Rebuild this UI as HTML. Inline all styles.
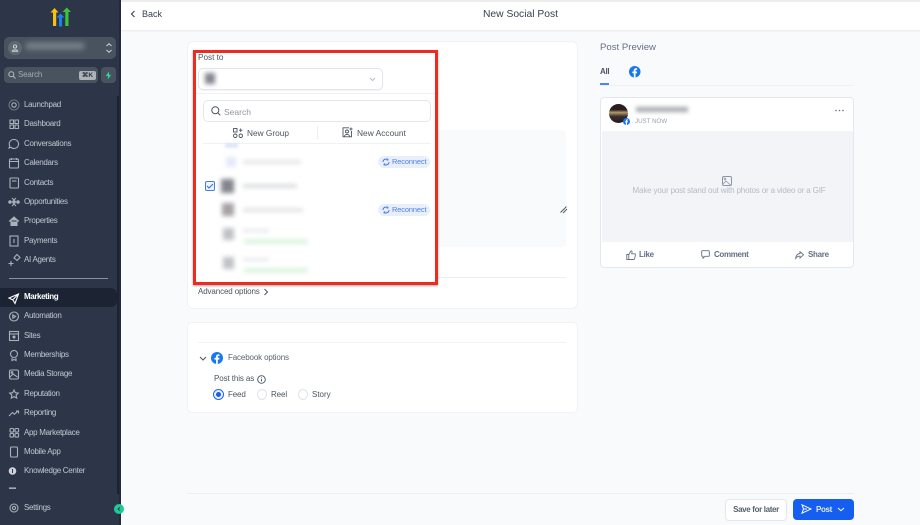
<!DOCTYPE html>
<html><head><meta charset="utf-8"><style>
*{box-sizing:border-box}
html,body{margin:0;padding:0}
body{width:920px;height:525px;overflow:hidden;position:relative;background:#f9fafc;font-family:"Liberation Sans",sans-serif;color:#374151}
.a{position:absolute}
.t{position:absolute;white-space:nowrap;line-height:12px}
.nav{position:absolute;left:24px;font-size:8px;letter-spacing:-.3px;line-height:12px;color:#c3c8d0;white-space:nowrap}
svg{position:absolute;overflow:visible;fill:none}
.ic{stroke:#aab1bc;stroke-width:1.1}
.blur{position:absolute}
</style></head><body>
<!-- sidebar -->
<div class="a" style="left:0;top:0;width:121px;height:525px;background:#2c3648"></div>
<div class="a" style="left:117px;top:96px;width:4px;height:398px;background:#1b2230"></div>
<div class="a" style="left:119px;top:0;width:2px;height:525px;background:#232b3a"></div>
<svg style="left:48px;top:6px" width="26" height="22" viewBox="0 0 26 22">
<path d="M2.500 6.500L6.500 2L10.500 6.500H8.200V20H5V6.500Z" fill="#fbbf0f"/>
<path d="M8.500 11.500L12.500 7.500L16.500 11.500H14V20.500H11V11.500Z" fill="#1a82ef"/>
<path d="M14.500 6L18.800 1.500L23 6H20.500V20H17.300V6Z" fill="#3ac43c"/>
</svg>
<div class="a" style="left:4px;top:37px;width:112px;height:22px;border-radius:5px;background:#49535f"></div>
<div class="a" style="left:8px;top:41px;width:14px;height:14px;border-radius:50%;background:#5f6873"></div>
<svg style="left:11px;top:44px" width="8" height="8" viewBox="0 0 8 8"><circle cx="4" cy="2.500" r="1.600" stroke="#d5d8dc" stroke-width=".9"/><path d="M1.300 7.300C1.300 5.300 6.700 5.300 6.700 7.300Z" stroke="#d5d8dc" stroke-width=".9"/></svg>
<div class="blur" style="left:26px;top:43px;width:58px;height:6px;background:#7f8791;filter:blur(3px)"></div>
<svg style="left:105px;top:42px" width="8" height="12" viewBox="0 0 8 12"><path d="M1.500 4L4 1.700L6.500 4M1.500 8L4 10.300L6.500 8" stroke="#ccd0d5"/></svg>
<div class="a" style="left:4px;top:67px;width:94px;height:16px;border-radius:4px;background:#49535f"></div>
<svg style="left:8px;top:71px" width="8" height="8" viewBox="0 0 8 8"><circle cx="3.300" cy="3.300" r="2.500" stroke="#b6bbc2"/><path d="M5.200 5.200L7.500 7.500" stroke="#b6bbc2"/></svg>
<div class="t" style="left:18px;top:69px;font-size:8px;letter-spacing:-.2px;color:#a3a9b2">Search</div>
<div class="a" style="left:79px;top:71px;width:17px;height:9px;border-radius:2px;background:#aeb3ba;color:#2c3648;font-size:6.500px;font-weight:bold;line-height:9px;text-align:center">⌘K</div>
<div class="a" style="left:101px;top:67px;width:15px;height:16px;border-radius:4px;background:#49535f"></div>
<svg style="left:105px;top:71px" width="7" height="9" viewBox="0 0 7 9"><path d="M4 .5L.8 5H3L2.700 8.500L6.200 3.800H4Z" fill="#34d399"/></svg>

<div class="a" style="left:0;top:288px;width:117px;height:19px;border-radius:0 6px 6px 0;background:#1c2433"></div>
<div class="a" style="left:9px;top:278px;width:99px;height:1px;background:#8b929c"></div>

<div class="nav" style="top:99px">Launchpad</div>
<div class="nav" style="top:118px">Dashboard</div>
<div class="nav" style="top:138px">Conversations</div>
<div class="nav" style="top:157px">Calendars</div>
<div class="nav" style="top:177px">Contacts</div>
<div class="nav" style="top:196px">Opportunities</div>
<div class="nav" style="top:215px">Properties</div>
<div class="nav" style="top:235px">Payments</div>
<div class="nav" style="top:254px">AI Agents</div>
<div class="nav" style="top:291px;color:#fff;font-weight:bold;font-size:8px;letter-spacing:-.4px">Marketing</div>
<div class="nav" style="top:310px">Automation</div>
<div class="nav" style="top:330px">Sites</div>
<div class="nav" style="top:349px">Memberships</div>
<div class="nav" style="top:368px">Media Storage</div>
<div class="nav" style="top:388px">Reputation</div>
<div class="nav" style="top:407px">Reporting</div>
<div class="nav" style="top:427px">App Marketplace</div>
<div class="nav" style="top:446px">Mobile App</div>
<div class="nav" style="top:465px">Knowledge Center</div>
<div class="nav" style="top:502px">Settings</div>

<svg width="30" height="525" style="left:0;top:0" viewBox="0 0 30 525">
<g class="ic">
<circle cx="14" cy="105" r="5" stroke="#6b7480"/><circle cx="14" cy="105" r="2.200"/>
<path d="M10 120h3.500v3.500H10zM15 120h3.500v3.500H15zM10 125h3.500v3.500H10zM15 125h3.500v3.500H15z"/>
<path d="M14 139.500a4.500 4.500 0 1 1-3 7.800l-2 .7.700-2a4.500 4.500 0 0 1 4.300-6.500z"/>
<rect x="9.500" y="159" width="9" height="9" rx="1"/><path d="M9.500 161.500h9M11.500 158v2M16.500 158v2"/>
<rect x="10" y="178" width="8.500" height="10" rx="1"/><path d="M12 181h4.500"/>
<path d="M12 198l2 2 2-2M12 206l2-2 2 2" /><circle cx="14" cy="202" r="1.300" fill="#aab1bc"/><circle cx="10" cy="202" r="1.200" fill="#aab1bc"/><circle cx="18" cy="202" r="1.200" fill="#aab1bc"/>
<path d="M9 221.500l5-4.500 5 4.500M11 220.500v5h6v-5" fill="#aab1bc"/>
<rect x="10" y="236" width="8" height="10"/><path d="M14 239v4"/>
<path d="M14 258l1.500-2 1.500-1.500 1.500 1.500 1.500 1.500-1.500 1.500-1.500 1.500-1.500-1.500zM11 261v5M8.500 263.500h5"/>
<circle cx="14" cy="316.500" r="4.500"/><path d="M12.800 314.800l2.800 1.700-2.800 1.700z"/>
<rect x="9.500" y="331.500" width="9" height="9"/><path d="M9.500 334h9"/><circle cx="14" cy="337" r="1" fill="#aab1bc"/>
<circle cx="14" cy="354" r="3.500"/><path d="M12 358v2.500l2-1 2 1V358"/>
<rect x="9.500" y="370" width="9" height="9" rx="1.500"/><path d="M10 377l3-3 4.500 3"/><circle cx="12" cy="372.500" r=".8"/>
<path d="M14 390l1.300 2.700 3 .4-2.200 2 .6 3-2.700-1.500-2.700 1.500.6-3-2.200-2 3-.4z"/>
<path d="M9 416l3.500-3.500 2 1.800 3.500-3.500M16 411h2.500v2.500"/>
<rect x="10" y="428.500" width="3.600" height="3.600" rx="1"/><rect x="15" y="428.500" width="3.600" height="3.600" rx="1"/><rect x="10" y="433.500" width="3.600" height="3.600" rx="1"/><rect x="15" y="433.500" width="3.600" height="3.600" rx="1"/>
<rect x="10.500" y="447" width="7" height="10" rx="1"/>
<circle cx="14" cy="508" r="4"/><circle cx="14" cy="508" r="1.600"/>
</g>
<path d="M9 298l9.500-4-3.500 9.500-2-3.500zM12.500 300l6-6" stroke="#fff" stroke-width="1.100"/>
<circle cx="12.500" cy="471" r="3.800" fill="#d0d4da"/><rect x="12" y="469" width="1" height="4" fill="#2c3648"/>
<rect x="9" y="487.500" width="7" height="1.300" fill="#c3c8d0"/>
</svg>
<div class="a" style="left:0;top:491px;width:117px;height:8px;background:#2c3648"></div>
<div class="a" style="left:114px;top:504px;width:10px;height:10px;border-radius:50%;background:#1fc997"></div>
<svg style="left:117px;top:507px" width="4" height="4" viewBox="0 0 4 4"><path d="M3 .4L1 2l2 1.600" stroke="#173a32" stroke-width=".9"/></svg>

<!-- header -->
<div class="a" style="left:121px;top:0;width:799px;height:30px;background:#fff;box-shadow:0 1px 2px rgba(0,0,0,.07)"></div>
<div class="a" style="left:121px;top:0;width:799px;height:2px;background:#ededee"></div>
<svg style="left:130px;top:10px" width="6" height="8" viewBox="0 0 6 8"><path d="M4.500 1L1.500 4l3 3" stroke="#374151" stroke-width="1.100"/></svg>
<div class="t" style="left:142px;top:8px;font-size:9px;color:#374151">Back</div>
<div class="t" style="left:483px;top:9px;font-size:10.300px;color:#374151">New Social Post</div>

<!-- left card -->
<div class="a" style="left:187px;top:41px;width:391px;height:268px;background:#fff;border:1px solid #f1f2f5;border-radius:6px"></div>
<div class="a" style="left:438px;top:130px;width:128px;height:117px;background:#f9fafb;border-radius:0 3px 3px 0"></div>
<svg style="left:560px;top:206px" width="8" height="8" viewBox="0 0 8 8"><path d="M.5 6.500L6.500.5M3 7L7 3" stroke="#555b66" stroke-width="1"/></svg>
<div class="a" style="left:438px;top:277px;width:128px;height:1px;background:#eceef1"></div>
<div class="t" style="left:198px;top:286px;font-size:8px;letter-spacing:-.12px;color:#4b5563">Advanced options</div>
<svg style="left:263px;top:288px" width="6" height="8" viewBox="0 0 6 8"><path d="M1.500 1l3 3-3 3" stroke="#4b5563"/></svg>

<!-- red box contents -->
<div class="a" style="left:193px;top:50px;width:245px;height:235px;background:#fff;border:3px solid #ef2b20;box-shadow:0 1px 2px rgba(60,60,80,.45)"></div>
<div class="t" style="left:198px;top:52px;font-size:8.200px;color:#4b5563">Post to</div>
<div class="a" style="left:198px;top:68px;width:185px;height:22px;border:1px solid #e3e5ea;border-radius:5px;box-shadow:0 1px 1px rgba(0,0,0,.05)"></div>
<div class="blur" style="left:205px;top:73px;width:10px;height:11px;background:#83858f;filter:blur(2.500px)"></div>
<svg style="left:369px;top:77px" width="7" height="5" viewBox="0 0 7 5"><path d="M1 1l2.500 2.500L6 1" stroke="#b8bcc4"/></svg>
<div class="a" style="left:196px;top:93px;width:239px;height:1px;background:#eef0f3"></div>
<div class="a" style="left:203px;top:100px;width:228px;height:22px;border:1px solid #e4e6eb;border-radius:5px"></div>
<svg style="left:211px;top:106px" width="10" height="10" viewBox="0 0 10 10"><circle cx="4.300" cy="4.300" r="3.500" stroke="#4b5563"/><path d="M7 7L9.300 9.300" stroke="#4b5563"/></svg>
<div class="t" style="left:224px;top:106px;font-size:8.500px;color:#8f95a0">Search</div>
<svg style="left:233px;top:128px" width="10" height="10" viewBox="0 0 10 10"><g stroke="#4b5563" stroke-width=".9"><rect x=".5" y=".5" width="3.500" height="3.500"/><rect x=".5" y="6" width="3.500" height="3.500" rx="1.700"/><rect x="6" y="6" width="3.500" height="3.500" rx="1.700"/><path d="M7.700.5v3.500M6 2.200h3.500"/></g></svg>
<div class="t" style="left:247px;top:127px;font-size:8.300px;color:#4b5563">New Group</div>
<div class="a" style="left:317px;top:126px;width:1px;height:13px;background:#eceef1"></div>
<svg style="left:342px;top:127px" width="11" height="11" viewBox="0 0 11 11"><g stroke="#4b5563" stroke-width=".9"><path d="M7 .8H1v9h8.500V4"/><circle cx="5" cy="4.500" r="1.500"/><path d="M2.500 9.500C2.500 6.800 7.500 6.800 7.500 9.500M9 .5v3M7.500 2h3"/></g></svg>
<div class="t" style="left:357px;top:127px;font-size:8.400px;color:#4b5563">New Account</div>
<div class="a" style="left:203px;top:143px;width:228px;height:1px;background:#f0f1f4"></div>
<div class="blur" style="left:225px;top:144px;width:13px;height:3px;background:#c9d9f5;filter:blur(1.500px)"></div>

<div class="blur" style="left:226px;top:157px;width:10px;height:10px;background:#e3e9f7;filter:blur(2.500px)"></div>
<div class="blur" style="left:243px;top:160px;width:58px;height:4px;background:#e6e7ea;filter:blur(2px)"></div>
<div class="a" style="left:378px;top:156px;width:52px;height:12px;border-radius:6px;background:#e8effb"></div>
<svg style="left:382px;top:158px" width="8" height="8" viewBox="0 0 8 8"><path d="M1 4a3 3 0 0 1 5-2.200M7 4a3 3 0 0 1-5 2.200" stroke="#3b74e0"/><path d="M6 .5v1.700H4.500M2 7.500V5.800h1.500" stroke="#3b74e0" stroke-width=".7"/></svg>
<div class="t" style="left:392px;top:156px;font-size:7.400px;letter-spacing:-.1px;color:#4a7fe5">Reconnect</div>

<div class="a" style="left:205px;top:181px;width:10px;height:10px;border:1px solid #3f7de8;border-radius:2px;background:#eff4fe"></div>
<svg style="left:206px;top:183px" width="8" height="6" viewBox="0 0 8 6"><path d="M1 3l2 2 4-4" stroke="#2b6be0" stroke-width="1"/></svg>
<div class="blur" style="left:221px;top:179px;width:13px;height:14px;background:#84858f;filter:blur(2.500px)"></div>
<div class="blur" style="left:243px;top:184px;width:54px;height:4px;background:#dcdee1;filter:blur(2px)"></div>

<div class="blur" style="left:222px;top:203px;width:12px;height:13px;background:#a8a0a5;filter:blur(2.500px)"></div>
<div class="blur" style="left:243px;top:208px;width:60px;height:4px;background:#e3e4e7;filter:blur(2px)"></div>
<div class="a" style="left:378px;top:204px;width:52px;height:12px;border-radius:6px;background:#e8effb"></div>
<svg style="left:382px;top:206px" width="8" height="8" viewBox="0 0 8 8"><path d="M1 4a3 3 0 0 1 5-2.200M7 4a3 3 0 0 1-5 2.200" stroke="#3b74e0"/><path d="M6 .5v1.700H4.500M2 7.500V5.800h1.500" stroke="#3b74e0" stroke-width=".7"/></svg>
<div class="t" style="left:392px;top:204px;font-size:7.400px;letter-spacing:-.1px;color:#4a7fe5">Reconnect</div>

<div class="blur" style="left:223px;top:228px;width:11px;height:12px;background:#bfc1c5;filter:blur(2.500px)"></div>
<div class="blur" style="left:243px;top:229px;width:26px;height:3px;background:#e6e7ea;filter:blur(2px)"></div>
<div class="blur" style="left:244px;top:239px;width:64px;height:5px;background:#dcf5e2;filter:blur(2px)"></div>
<div class="blur" style="left:223px;top:257px;width:11px;height:12px;background:#bfc1c5;filter:blur(2.500px)"></div>
<div class="blur" style="left:243px;top:258px;width:26px;height:3px;background:#e6e7ea;filter:blur(2px)"></div>
<div class="blur" style="left:244px;top:268px;width:64px;height:5px;background:#dcf5e2;filter:blur(2px)"></div>

<!-- facebook card -->
<div class="a" style="left:187px;top:322px;width:391px;height:91px;background:#fff;border:1px solid #f1f2f5;border-radius:5px"></div>
<div class="a" style="left:198px;top:342px;width:368px;height:1px;background:#f1f2f5"></div>
<svg style="left:199px;top:356px" width="8" height="6" viewBox="0 0 8 6"><path d="M1 1l3 3 3-3" stroke="#4b5563"/></svg>
<svg style="left:211px;top:352px" width="12" height="12" viewBox="0 0 12 12"><circle cx="6" cy="6" r="6" fill="#1877f2"/><path d="M6.800 12V7.600H8.200L8.500 5.800H6.800V4.900C6.800 4.300 7 4 7.700 4H8.500V2.500C8.200 2.400 7.700 2.400 7.200 2.400 5.800 2.400 5 3.200 5 4.700V5.800H3.500V7.600H5V12Z" fill="#fff"/></svg>
<div class="t" style="left:228px;top:352px;font-size:8px;letter-spacing:-.14px;color:#5b6472">Facebook options</div>
<div class="t" style="left:214px;top:373px;font-size:8px;letter-spacing:-.1px;color:#4b5563">Post this as</div>
<svg style="left:257px;top:375px" width="9" height="9" viewBox="0 0 9 9"><circle cx="4.500" cy="4.500" r="3.800" stroke="#4b5563" stroke-width=".9"/><path d="M4.500 4v2.500M4.500 2.400v.8" stroke="#4b5563" stroke-width=".9"/></svg>
<div class="a" style="left:213px;top:389px;width:11px;height:11px;border:1px solid #2563eb;border-radius:50%;background:#eef3fe"></div>
<div class="a" style="left:216px;top:392px;width:5px;height:5px;border-radius:50%;background:#155eef"></div>
<div class="t" style="left:228px;top:389px;font-size:8px;letter-spacing:-.15px;color:#4b5563">Feed</div>
<div class="a" style="left:257px;top:389px;width:10px;height:11px;border:1px solid #dfe2e7;border-radius:50%;background:#fff"></div>
<div class="t" style="left:271px;top:389px;font-size:8px;letter-spacing:-.1px;color:#4b5563">Reel</div>
<div class="a" style="left:298px;top:389px;width:10px;height:11px;border:1px solid #dfe2e7;border-radius:50%;background:#fff"></div>
<div class="t" style="left:312px;top:389px;font-size:8px;color:#4b5563">Story</div>

<!-- preview -->
<div class="t" style="left:600px;top:42px;font-size:9.600px;color:#667085">Post Preview</div>
<div class="t" style="left:600px;top:66px;font-size:8px;font-weight:bold;letter-spacing:-.3px;color:#4b5563">All</div>
<div class="a" style="left:600px;top:83px;width:9px;height:2px;background:#4f86f7"></div>
<svg style="left:629px;top:66px" width="11.500" height="11.500" viewBox="0 0 12 12"><circle cx="6" cy="6" r="6" fill="#1877f2"/><path d="M6.800 12V7.600H8.200L8.500 5.800H6.800V4.900C6.800 4.300 7 4 7.700 4H8.500V2.500C8.200 2.400 7.700 2.400 7.200 2.400 5.800 2.400 5 3.200 5 4.700V5.800H3.500V7.600H5V12Z" fill="#fff"/></svg>
<div class="a" style="left:600px;top:84.500px;width:254px;height:1px;background:#f0f1f4"></div>
<div class="a" style="left:600px;top:97px;width:254px;height:171px;background:#fff;border:1px solid #e4e7ec;border-radius:4px;overflow:hidden">
<div class="a" style="left:1px;top:33px;width:252px;height:111px;background:#f2f4f7"></div>
</div>
<div class="a" style="left:609px;top:104px;width:19px;height:19px;border-radius:50%;background:linear-gradient(#2a1e1e 0 30%,#b59a6d 45%,#3a2f2f 65%,#241a1a)"></div>
<svg style="left:623px;top:118px" width="7" height="7" viewBox="0 0 12 12"><circle cx="6" cy="6" r="6" fill="#1877f2"/><path d="M6.800 12V7.600H8.200L8.500 5.800H6.800V4.900C6.800 4.300 7 4 7.700 4H8.500V2.500C8.200 2.400 7.700 2.400 7.200 2.400 5.800 2.400 5 3.200 5 4.700V5.800H3.500V7.600H5V12Z" fill="#fff"/></svg>
<div class="blur" style="left:636px;top:107px;width:52px;height:5px;background:#a5a8ae;filter:blur(2.200px)"></div>
<div class="t" style="left:635px;top:116px;font-size:6.200px;color:#98a2b3">JUST NOW</div>
<svg style="left:835px;top:109px" width="9" height="3" viewBox="0 0 9 3"><circle cx="1" cy="1.500" r=".8" fill="#667085"/><circle cx="4.500" cy="1.500" r=".8" fill="#667085"/><circle cx="8" cy="1.500" r=".8" fill="#667085"/></svg>
<svg style="left:722px;top:176px" width="10" height="10" viewBox="0 0 10 10"><rect x=".5" y=".5" width="9" height="9" rx="1.500" stroke="#8c94a3"/><path d="M1 8l3-3 4.500 4" stroke="#8c94a3" stroke-width=".8"/><circle cx="3" cy="3" r=".9" stroke="#8c94a3" stroke-width=".7"/></svg>
<div class="t" style="left:632.500px;top:185px;font-size:8px;letter-spacing:-.15px;color:#b4bac5">Make your post stand out with photos or a video or a GIF</div>
<svg style="left:626px;top:250px" width="10" height="10" viewBox="0 0 10 10"><path d="M.8 4.500H2.800V9.500H.8ZM2.800 4.500L5 .8C5.800.8 6.200 1.500 6 2.500L5.700 3.800H8.800C9.300 3.800 9.500 4.300 9.400 4.800L8.600 8.800C8.500 9.300 8.200 9.500 7.700 9.500H2.800" stroke="#667085" stroke-width=".9"/></svg>
<div class="t" style="left:639px;top:249px;font-size:8px;font-weight:bold;letter-spacing:-.3px;color:#667085">Like</div>
<svg style="left:701px;top:250px" width="9" height="9" viewBox="0 0 9 9"><path d="M1.500.7H7.500Q8.300.7 8.300 1.500V5.500Q8.300 6.300 7.500 6.300H4L2 8.300V6.300H1.500Q.7 6.300.7 5.500V1.500Q.7.700 1.500.7Z" stroke="#667085" stroke-width=".9"/></svg>
<div class="t" style="left:714px;top:249px;font-size:8px;font-weight:bold;letter-spacing:-.35px;color:#667085">Comment</div>
<svg style="left:795px;top:251px" width="9" height="8" viewBox="0 0 9 8"><path d="M5 .7L8.500 3.800 5 7V5.200C3 5 1.800 5.800.7 7.300 1 4.500 2.600 2.800 5 2.500Z" stroke="#667085" stroke-width=".9"/></svg>
<div class="t" style="left:808px;top:249px;font-size:8px;font-weight:bold;letter-spacing:-.3px;color:#667085">Share</div>

<!-- footer -->
<div class="a" style="left:187px;top:493px;width:667px;height:1px;background:#eceef2"></div>
<div class="a" style="left:725px;top:499px;width:62px;height:22px;background:#fff;border:1px solid #e4e7ec;border-radius:4px;font-size:8px;font-weight:bold;letter-spacing:-.35px;color:#565f6e;text-align:center;line-height:20px">Save for later</div>
<div class="a" style="left:793px;top:499px;width:61px;height:21px;background:#155eef;border-radius:4px"></div>
<svg style="left:801px;top:504px" width="11" height="10" viewBox="0 0 11 10"><path d="M1 .8L10 5 1 9.200 2.500 5ZM2.500 5H6" stroke="#fff"/></svg>
<div class="t" style="left:816px;top:504px;font-size:8px;font-weight:bold;letter-spacing:-.35px;color:#dfe8fd">Post</div>
<svg style="left:837px;top:507px" width="8" height="5" viewBox="0 0 8 5"><path d="M1 1l3 2.700L7 1" stroke="#fff"/></svg>
</body></html>
